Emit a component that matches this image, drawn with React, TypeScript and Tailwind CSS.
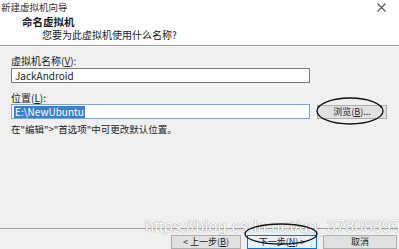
import React from "react";

const font = { fontFamily: '"Noto Sans CJK SC", "Liberation Sans", sans-serif' };

export default function App() {
  return (
    <div
      className="relative w-[399px] h-[249px] overflow-hidden flex flex-col bg-[#f0f0f0] text-[#1b1b1b]"
      style={font}
    >
      {/* header */}
      <div className="bg-white h-[46px] shrink-0 flex flex-col border-b border-[#a0a0a0]">
        <div className="h-[16px] flex items-start justify-between pl-[1px] pr-[13px]">
          <span className="text-[9.5px] leading-[14px] text-[#333]">新建虚拟机向导</span>
          <svg width="9" height="9" viewBox="0 0 9 9" className="mt-[3px]">
            <path d="M0.5 0.5 L8.5 8.5 M8.5 0.5 L0.5 8.5" stroke="#555" strokeWidth="1.1" fill="none" />
          </svg>
        </div>
        <div className="pl-[22px] text-[10.5px] leading-[12px] font-bold">命名虚拟机</div>
        <div className="pl-[42px] mt-[1px] text-[10px] leading-[12px]">您要为此虚拟机使用什么名称?</div>
      </div>
      {/* body */}
      <div className="flex-1 flex flex-col px-[11px] pt-[7px] border-t border-white">
        <div className="text-[10px] leading-[13px]">虚拟机名称(<span className="underline">V</span>):</div>
        <div className="w-[299px] h-[15px] mt-[1px] bg-white border border-[#7a7a7a] flex items-center pl-[3px] text-[10px]">
          JackAndroid
        </div>
        <div className="text-[10px] leading-[13px] mt-[8px]">位置(<span className="underline">L</span>):</div>
        <div className="flex items-center mt-[0px]">
          <div className="w-[299px] h-[15px] bg-white border border-[#7aa7d6] flex items-center pl-[2px] text-[10px]">
            <span className="bg-[#3b7fd1] text-white leading-[12px] px-[1px]">E:\NewUbuntu</span>
          </div>
          <div className="ml-[7px] w-[70px] h-[14px] bg-[#e1e1e1] border border-[#adadad] flex items-center justify-center text-[9px]">
            浏览(<span className="underline">B</span>)...
          </div>
        </div>
        <div className="text-[9.5px] leading-[12px] mt-[4px]">在"编辑"&gt;"首选项"中可更改默认位置。</div>
      </div>
      {/* footer */}
      <div className="h-[21px] shrink-0 border-t border-[#a0a0a0] flex items-end justify-end gap-[6px] pr-[2px]">
        <div className="w-[70px] h-[14px] bg-[#e1e1e1] border border-[#adadad] flex items-center justify-center text-[9px]">
          &lt; 上一步(<span className="underline">B</span>)
        </div>
        <div className="w-[70px] h-[14px] bg-[#e5f1fb] border border-[#0078d7] flex items-center justify-center text-[9px]">
          下一步(<span className="underline">N</span>) &gt;
        </div>
        <div className="w-[74px] h-[14px] bg-[#e1e1e1] border border-[#adadad] flex items-center justify-center text-[9px]">
          取消
        </div>
      </div>
      {/* watermark */}
      <div
        className="absolute left-[145px] top-[218px] text-[16px] leading-[17px] text-white tracking-[0.3px]"
        style={{ fontFamily: '"Liberation Sans", sans-serif', textShadow: "0 0 1px #999, 0 0 1px #999" }}
      >
        https://blog.csdn.net/qq_37808895
      </div>
      {/* annotation ellipses */}
      <svg className="absolute left-0 top-0 pointer-events-none" width="399" height="249">
        <ellipse cx="350" cy="111" rx="33" ry="13" fill="none" stroke="#111" strokeWidth="1.3" />
        <ellipse cx="281" cy="234" rx="36" ry="10" fill="none" stroke="#111" strokeWidth="1.3" />
      </svg>
    </div>
  );
}
